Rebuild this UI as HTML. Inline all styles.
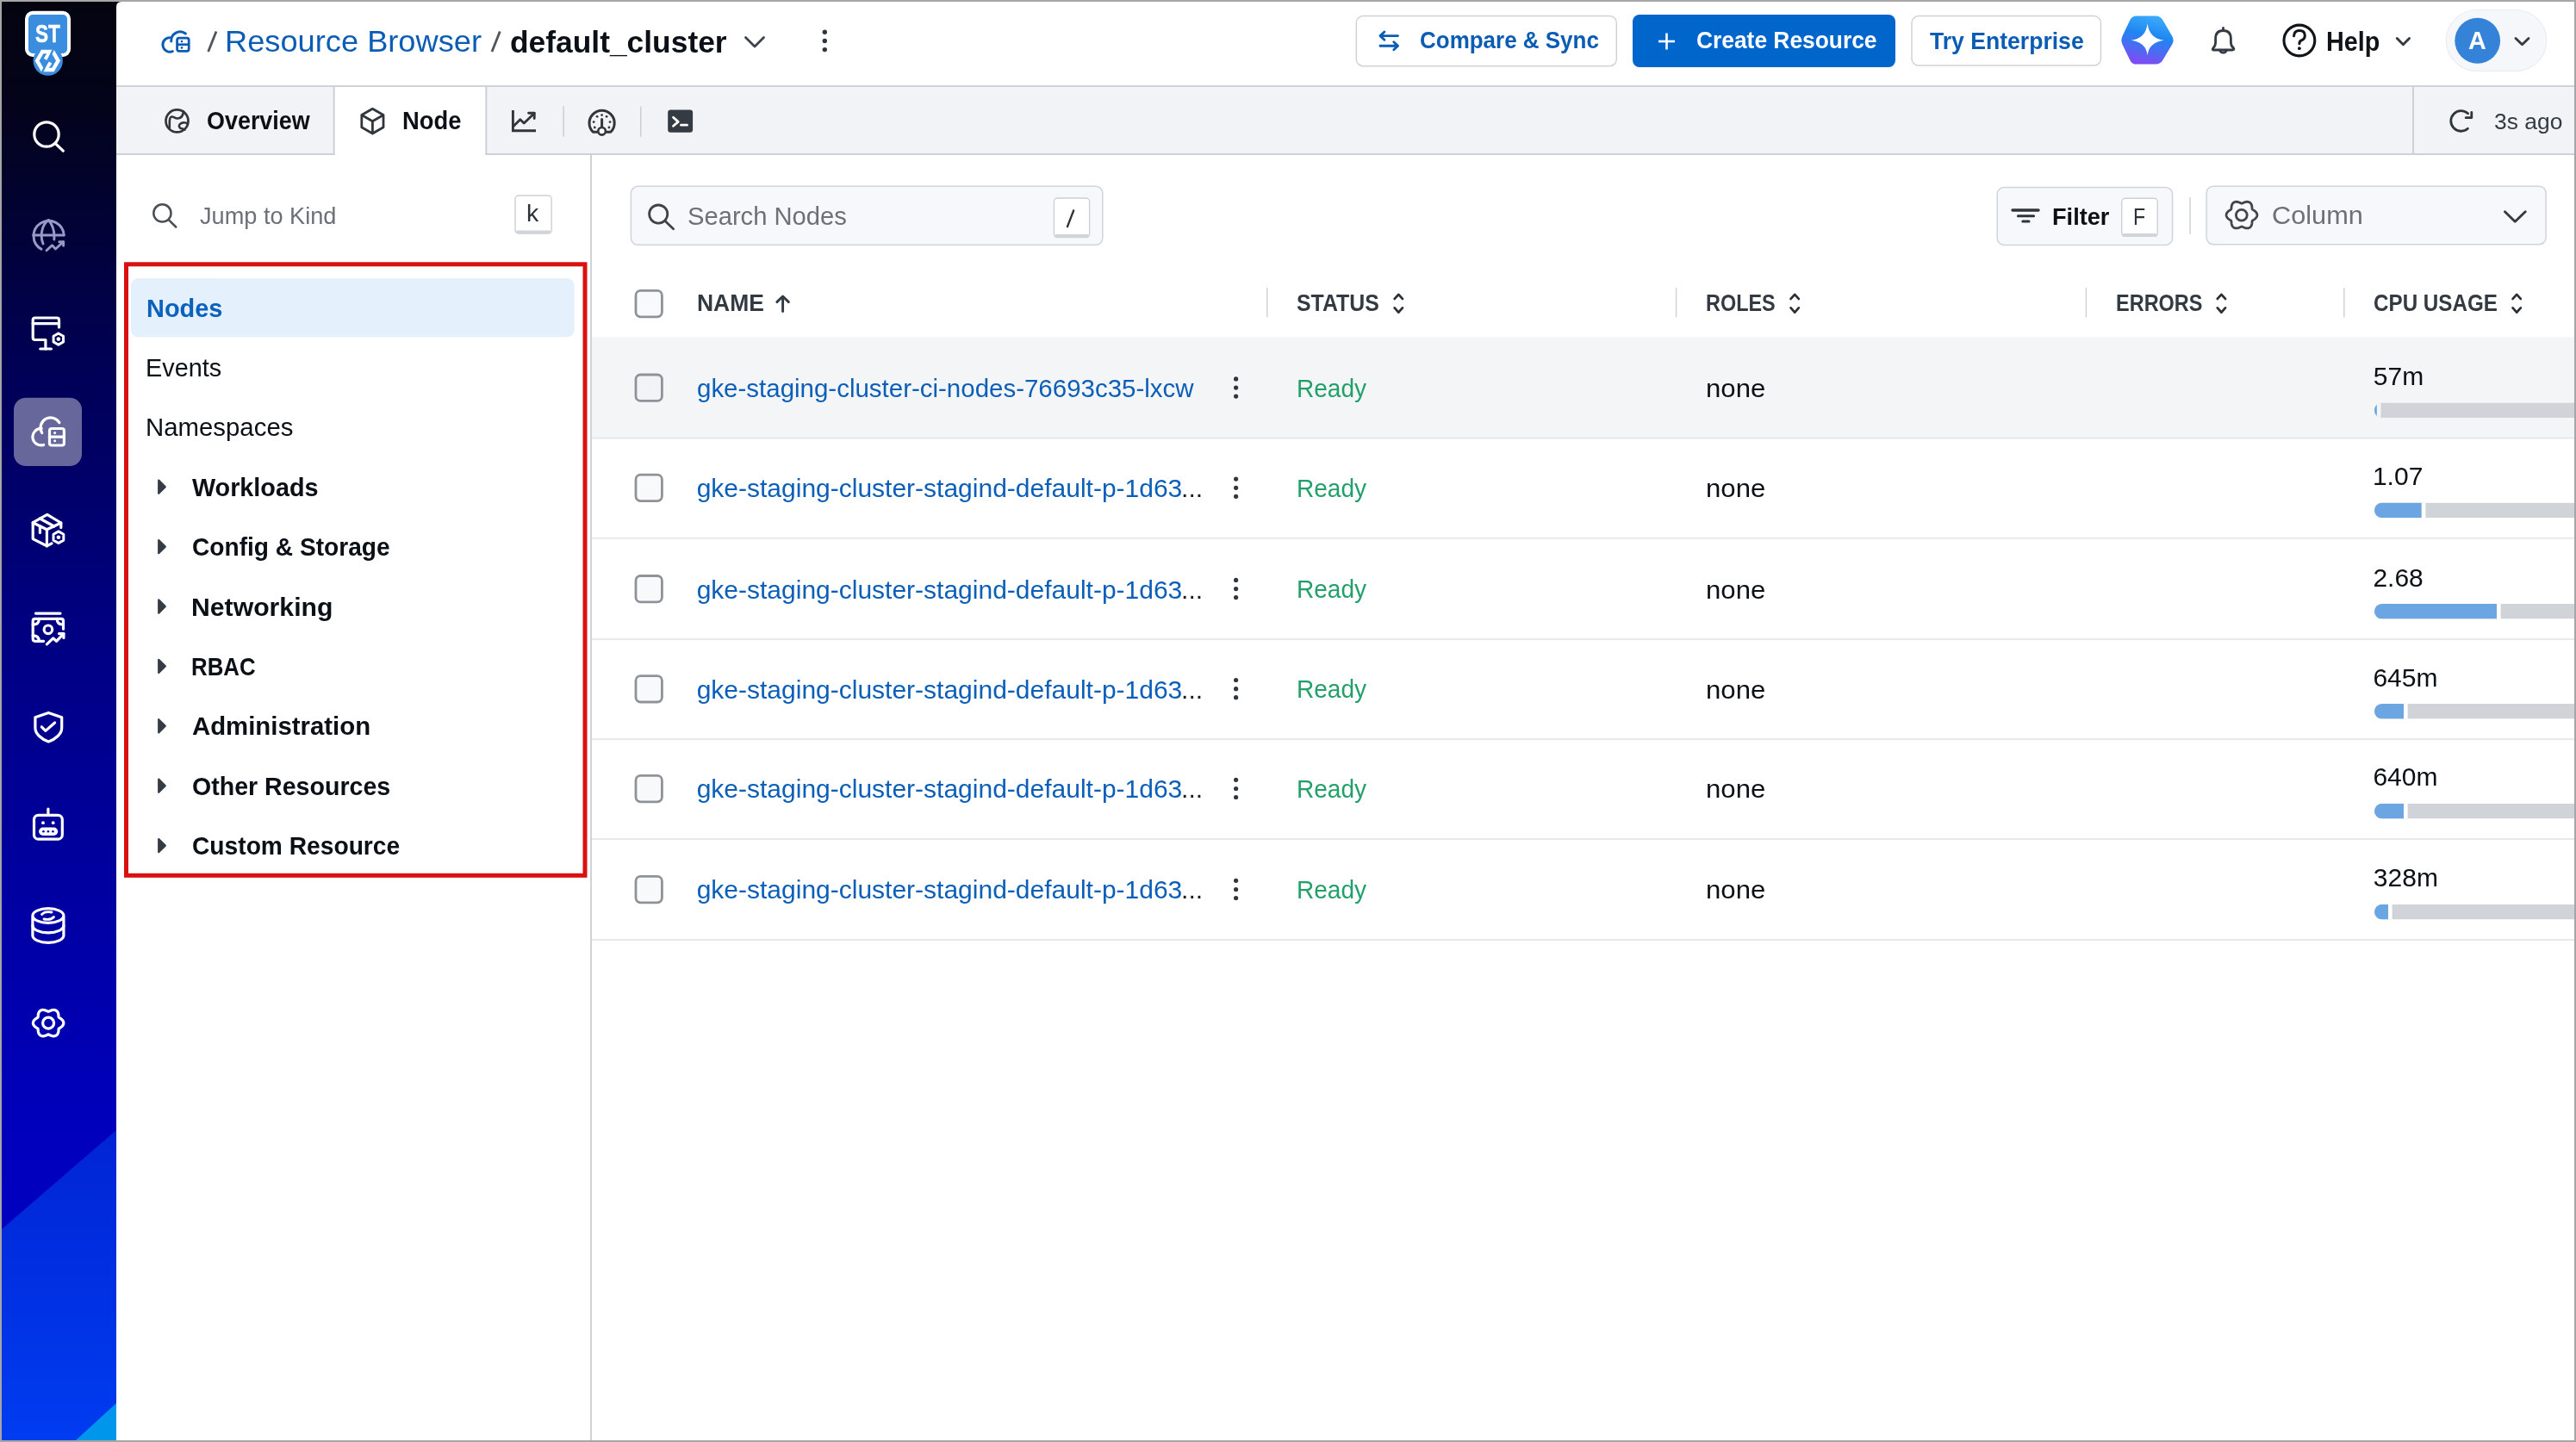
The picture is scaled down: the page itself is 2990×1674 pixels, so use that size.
<!DOCTYPE html>
<html><head><meta charset="utf-8"><style>
html,body{margin:0;padding:0;width:2990px;height:1674px;overflow:hidden;background:#a6a6a6;}
body{position:relative;font-family:"Liberation Sans",sans-serif;}
.t{position:absolute;white-space:nowrap;line-height:1;transform-origin:0 0;}
.a{position:absolute;box-sizing:border-box;}
svg{position:absolute;overflow:visible;}
</style></head><body>
<svg width="2990" height="1674" style="left:0;top:0"><defs>
<linearGradient id="sb" x1="0" y1="0" x2="0" y2="1">
 <stop offset="0" stop-color="#040410"/>
 <stop offset="0.07" stop-color="#03031a"/>
 <stop offset="0.24" stop-color="#000052"/>
 <stop offset="0.42" stop-color="#00007e"/>
 <stop offset="0.60" stop-color="#00009e"/>
 <stop offset="0.78" stop-color="#0000bc"/>
 <stop offset="1" stop-color="#0000c8"/>
</linearGradient>
<linearGradient id="sb2" x1="0" y1="0" x2="0" y2="1">
 <stop offset="0" stop-color="#0024d4"/>
 <stop offset="1" stop-color="#003cf0"/>
</linearGradient>
<linearGradient id="ai" x1="0.85" y1="0" x2="0.6" y2="1">
 <stop offset="0" stop-color="#3fb0fb"/>
 <stop offset="0.45" stop-color="#1f86f2"/>
 <stop offset="0.8" stop-color="#5565f2"/>
 <stop offset="1" stop-color="#7b4ef5"/>
</linearGradient>
</defs>
<rect x="2" y="2" width="143" height="1670" fill="url(#sb)" />
<path d="M2 1427 L135 1312 L135 1672 L2 1672 Z" fill="url(#sb2)" />
<path d="M135 1629 L135 1672 L88 1672 Z" fill="#0096ec" />
<rect x="16" y="461.7" width="79" height="79.3" fill="#67679c" rx="14" />
<rect x="29" y="12.8" width="53" height="53.2" fill="#ffffff" rx="9" />
<rect x="33" y="17" width="45" height="45" fill="#3b8ddf" rx="5" />
<circle cx="55.7" cy="70.6" r="17.2" fill="#3b8ddf"/>
<path d="M67.50 70.50 L61.40 81.07 L49.20 81.07 L43.10 70.50 L49.20 59.93 L61.40 59.93 Z" stroke="#ffffff" stroke-width="4.4" fill="none" stroke-linejoin="miter" stroke-linecap="round" />
<path d="M57.8 60.5 L52.6 68.8" stroke="#ffffff" stroke-width="4.2" fill="none" stroke-linejoin="round" stroke-linecap="butt" />
<path d="M53 80.5 L58.6 72.6" stroke="#ffffff" stroke-width="4.2" fill="none" stroke-linejoin="round" stroke-linecap="butt" />
<line x1="62.8" y1="55.5" x2="48.2" y2="85.5" stroke="#3b8ddf" stroke-width="2.4" stroke-linecap="butt"/>
<circle cx="54" cy="156" r="14.2" fill="none" stroke="#ffffff" stroke-width="3.2"/>
<line x1="64.3" y1="166.6" x2="73.3" y2="175.2" stroke="#ffffff" stroke-width="3.2" stroke-linecap="round"/>
<path d="M74.2 273 A17.6 17.6 0 1 0 48 289.3" stroke="#9899c4" stroke-width="2.9" fill="none" stroke-linejoin="round" stroke-linecap="round" />
<line x1="38.6" y1="273" x2="74.2" y2="273" stroke="#9899c4" stroke-width="2.9" stroke-linecap="round"/>
<path d="M56.3 255.5 C47 262 47 276 50 283" stroke="#9899c4" stroke-width="2.9" fill="none" stroke-linejoin="round" stroke-linecap="round" />
<path d="M56.3 255.5 C62 262 63.5 270 62.8 278" stroke="#9899c4" stroke-width="2.9" fill="none" stroke-linejoin="round" stroke-linecap="round" />
<path d="M54 290.8 L60.5 284.8 L64.5 289 L73.4 280.8" stroke="#9899c4" stroke-width="2.9" fill="none" stroke-linejoin="round" stroke-linecap="round" />
<path d="M68.8 280.8 L73.6 280.6 L73.6 285.2" stroke="#9899c4" stroke-width="2.9" fill="none" stroke-linejoin="round" stroke-linecap="round" />
<path d="M68.5 380 V371.5 Q68.5 369 66 369 H40.7 Q38.2 369 38.2 371.5 V392 Q38.2 394.5 40.7 394.5 H52.9 V405" stroke="#ffffff" stroke-width="3.2" fill="none" stroke-linejoin="round" stroke-linecap="round" />
<line x1="38.2" y1="375.6" x2="68.5" y2="375.6" stroke="#ffffff" stroke-width="3.2" stroke-linecap="round"/>
<line x1="46.8" y1="405" x2="59.4" y2="405" stroke="#ffffff" stroke-width="3.2" stroke-linecap="round"/>
<path d="M73.52 396.90 L67.80 400.20 L62.08 396.90 L62.08 390.30 L67.80 387.00 L73.52 390.30 Z" stroke="#ffffff" stroke-width="3.0" fill="none" stroke-linejoin="round" stroke-linecap="round" />
<circle cx="67.8" cy="393.6" r="2.3" fill="#ffffff"/>
<path d="M50.6 516.4 A9.7 9.7 0 1 1 48.3 497.5" stroke="#ffffff" stroke-width="3.2" fill="none" stroke-linejoin="round" stroke-linecap="round" />
<path d="M48.7 502.5 A11.5 11.5 0 0 1 68.9 490.6" stroke="#ffffff" stroke-width="3.2" fill="none" stroke-linejoin="round" stroke-linecap="round" />
<rect x="57.5" y="497.5" width="16.9" height="19.5" fill="none" rx="2.5" stroke="#ffffff" stroke-width="3.2" />
<line x1="57.5" y1="507.2" x2="74.4" y2="507.2" stroke="#ffffff" stroke-width="3.2" stroke-linecap="round"/>
<circle cx="63.6" cy="502.4" r="1.5" fill="#ffffff"/>
<circle cx="63.6" cy="511.8" r="1.5" fill="#ffffff"/>
<path d="M70.8 612.4 V607 L54.8 597.3 L38.2 606.7 V625.6 L54.4 633.8 L60 630.8" stroke="#ffffff" stroke-width="3.2" fill="none" stroke-linejoin="round" stroke-linecap="round" />
<path d="M38.2 606.7 L54.4 614.7 L70.8 607" stroke="#ffffff" stroke-width="3.2" fill="none" stroke-linejoin="round" stroke-linecap="round" />
<line x1="54.4" y1="614.7" x2="54.4" y2="633.8" stroke="#ffffff" stroke-width="3.2" stroke-linecap="round"/>
<path d="M46.4 602 L62.8 611 " stroke="#ffffff" stroke-width="3.2" fill="none" stroke-linejoin="round" stroke-linecap="round" />
<path d="M46.4 610.7 V618.5" stroke="#ffffff" stroke-width="3.2" fill="none" stroke-linejoin="round" stroke-linecap="round" />
<path d="M73.79 627.10 L67.90 630.50 L62.01 627.10 L62.01 620.30 L67.90 616.90 L73.79 620.30 Z" stroke="#ffffff" stroke-width="3.0" fill="none" stroke-linejoin="round" stroke-linecap="round" />
<circle cx="67.9" cy="623.7" r="2.3" fill="#ffffff"/>
<line x1="41.4" y1="712.1" x2="70" y2="712.1" stroke="#ffffff" stroke-width="3.2" stroke-linecap="round"/>
<path d="M73.5 730.2 V721 Q73.5 718.4 71 718.4 H40.7 Q38.2 718.4 38.2 721 V741.8 Q38.2 744.3 40.7 744.3 H50.6" stroke="#ffffff" stroke-width="3.2" fill="none" stroke-linejoin="round" stroke-linecap="round" />
<path d="M38.2 725 Q45.3 725 45.3 718.4" stroke="#ffffff" stroke-width="3.2" fill="none" stroke-linejoin="round" stroke-linecap="round" />
<path d="M66.2 718.4 Q66.2 725 73.5 725" stroke="#ffffff" stroke-width="3.2" fill="none" stroke-linejoin="round" stroke-linecap="round" />
<path d="M38.2 737.9 Q45.3 737.9 45.3 744.3" stroke="#ffffff" stroke-width="3.2" fill="none" stroke-linejoin="round" stroke-linecap="round" />
<circle cx="55.9" cy="730.8" r="4.8" fill="none" stroke="#ffffff" stroke-width="3.2"/>
<path d="M54.4 747.8 L61.7 740.9 L65.5 744.3 L73.9 735.6" stroke="#ffffff" stroke-width="3.2" fill="none" stroke-linejoin="round" stroke-linecap="round" />
<path d="M68.5 735.6 H73.9 V740.5" stroke="#ffffff" stroke-width="3.2" fill="none" stroke-linejoin="round" stroke-linecap="round" />
<path d="M56.3 827.4 L40.9 832.8 V845 C40.9 852 48 858 56.3 861 C64.6 858 71.7 852 71.7 845 V832.8 Z" stroke="#ffffff" stroke-width="3.2" fill="none" stroke-linejoin="round" stroke-linecap="round" />
<path d="M48.3 843.8 L52.9 848.4 L63.6 839" stroke="#ffffff" stroke-width="3.2" fill="none" stroke-linejoin="round" stroke-linecap="round" />
<line x1="55.9" y1="939" x2="55.9" y2="945.8" stroke="#ffffff" stroke-width="3.2" stroke-linecap="round"/>
<rect x="39.5" y="946.4" width="32.8" height="27.8" fill="none" rx="5" stroke="#ffffff" stroke-width="3.2" />
<circle cx="50" cy="955.2" r="1.9" fill="#ffffff"/>
<circle cx="61.7" cy="955.2" r="1.9" fill="#ffffff"/>
<rect x="45.1" y="960.5" width="22.1" height="9.4" fill="#ffffff" rx="4.7" />
<circle cx="50.4" cy="965.2" r="1.3" fill="#0000a0"/>
<circle cx="55.9" cy="965.2" r="1.3" fill="#0000a0"/>
<circle cx="61.4" cy="965.2" r="1.3" fill="#0000a0"/>
<path d="M37.9 1063 A18 8.3 0 1 0 73.9 1063 A18 8.3 0 1 0 37.9 1063 V1086 A18 8.3 0 0 0 73.9 1086 V1063" stroke="#ffffff" stroke-width="3.2" fill="none" stroke-linejoin="round" stroke-linecap="round" />
<path d="M37.9 1074.5 A18 8.3 0 0 0 73.9 1074.5" stroke="#ffffff" stroke-width="3.2" fill="none" stroke-linejoin="round" stroke-linecap="round" />
<path d="M48.5 1061.5 Q52 1057.5 60 1059" stroke="#ffffff" stroke-width="2.8" fill="none" stroke-linejoin="round" stroke-linecap="round" />
<path d="M62.5 1064.5 Q59 1068.5 51 1067" stroke="#ffffff" stroke-width="2.8" fill="none" stroke-linejoin="round" stroke-linecap="round" />
<path d="M73.80 1187.60 L73.78 1188.04 L73.71 1188.48 L73.60 1188.91 L73.45 1189.33 L73.26 1189.75 L73.04 1190.15 L72.78 1190.54 L72.48 1190.91 L72.17 1191.26 L71.82 1191.60 L71.46 1191.92 L71.09 1192.23 L70.70 1192.51 L70.31 1192.78 L69.93 1193.04 L69.54 1193.29 L69.17 1193.52 L68.82 1193.76 L68.50 1193.99 L68.22 1194.25 L68.13 1194.60 L68.07 1194.99 L68.04 1195.39 L68.00 1195.82 L67.97 1196.25 L67.93 1196.70 L67.88 1197.16 L67.81 1197.62 L67.72 1198.08 L67.61 1198.53 L67.47 1198.99 L67.31 1199.43 L67.11 1199.85 L66.89 1200.26 L66.64 1200.65 L66.36 1201.01 L66.04 1201.35 L65.71 1201.65 L65.34 1201.92 L64.95 1202.16 L64.54 1202.36 L64.11 1202.53 L63.66 1202.65 L63.20 1202.74 L62.72 1202.79 L62.25 1202.81 L61.76 1202.79 L61.28 1202.73 L60.79 1202.65 L60.31 1202.54 L59.84 1202.40 L59.38 1202.24 L58.92 1202.07 L58.48 1201.89 L58.05 1201.69 L57.64 1201.50 L57.24 1201.32 L56.85 1201.14 L56.47 1201.00 L56.10 1200.90 L55.73 1201.00 L55.35 1201.14 L54.96 1201.32 L54.56 1201.50 L54.15 1201.69 L53.72 1201.89 L53.28 1202.07 L52.82 1202.24 L52.36 1202.40 L51.89 1202.54 L51.41 1202.65 L50.92 1202.73 L50.44 1202.79 L49.95 1202.81 L49.48 1202.79 L49.00 1202.74 L48.54 1202.65 L48.09 1202.53 L47.66 1202.36 L47.25 1202.16 L46.86 1201.92 L46.49 1201.65 L46.16 1201.35 L45.84 1201.01 L45.56 1200.65 L45.31 1200.26 L45.09 1199.85 L44.89 1199.43 L44.73 1198.99 L44.59 1198.53 L44.48 1198.08 L44.39 1197.62 L44.32 1197.16 L44.27 1196.70 L44.23 1196.25 L44.20 1195.82 L44.16 1195.39 L44.13 1194.99 L44.07 1194.60 L43.98 1194.25 L43.70 1193.99 L43.38 1193.76 L43.03 1193.52 L42.66 1193.29 L42.27 1193.04 L41.89 1192.78 L41.50 1192.51 L41.11 1192.23 L40.74 1191.92 L40.38 1191.60 L40.03 1191.26 L39.72 1190.91 L39.42 1190.54 L39.16 1190.15 L38.94 1189.75 L38.75 1189.33 L38.60 1188.91 L38.49 1188.48 L38.42 1188.04 L38.40 1187.60 L38.42 1187.16 L38.49 1186.72 L38.60 1186.29 L38.75 1185.87 L38.94 1185.45 L39.16 1185.05 L39.42 1184.66 L39.72 1184.29 L40.03 1183.94 L40.38 1183.60 L40.74 1183.28 L41.11 1182.97 L41.50 1182.69 L41.89 1182.42 L42.27 1182.16 L42.66 1181.91 L43.03 1181.68 L43.38 1181.44 L43.70 1181.21 L43.98 1180.95 L44.07 1180.60 L44.13 1180.21 L44.16 1179.81 L44.20 1179.38 L44.23 1178.95 L44.27 1178.50 L44.32 1178.04 L44.39 1177.58 L44.48 1177.12 L44.59 1176.67 L44.73 1176.21 L44.89 1175.77 L45.09 1175.35 L45.31 1174.94 L45.56 1174.55 L45.84 1174.19 L46.16 1173.85 L46.49 1173.55 L46.86 1173.28 L47.25 1173.04 L47.66 1172.84 L48.09 1172.67 L48.54 1172.55 L49.00 1172.46 L49.48 1172.41 L49.95 1172.39 L50.44 1172.41 L50.92 1172.47 L51.41 1172.55 L51.89 1172.66 L52.36 1172.80 L52.82 1172.96 L53.28 1173.13 L53.72 1173.31 L54.15 1173.51 L54.56 1173.70 L54.96 1173.88 L55.35 1174.06 L55.73 1174.20 L56.10 1174.30 L56.47 1174.20 L56.85 1174.06 L57.24 1173.88 L57.64 1173.70 L58.05 1173.51 L58.48 1173.31 L58.92 1173.13 L59.38 1172.96 L59.84 1172.80 L60.31 1172.66 L60.79 1172.55 L61.28 1172.47 L61.76 1172.41 L62.25 1172.39 L62.72 1172.41 L63.20 1172.46 L63.66 1172.55 L64.11 1172.67 L64.54 1172.84 L64.95 1173.04 L65.34 1173.28 L65.71 1173.55 L66.04 1173.85 L66.36 1174.19 L66.64 1174.55 L66.89 1174.94 L67.11 1175.35 L67.31 1175.77 L67.47 1176.21 L67.61 1176.67 L67.72 1177.12 L67.81 1177.58 L67.88 1178.04 L67.93 1178.50 L67.97 1178.95 L68.00 1179.38 L68.04 1179.81 L68.07 1180.21 L68.13 1180.60 L68.22 1180.95 L68.50 1181.21 L68.82 1181.44 L69.17 1181.68 L69.54 1181.91 L69.93 1182.16 L70.31 1182.42 L70.70 1182.69 L71.09 1182.97 L71.46 1183.28 L71.82 1183.60 L72.17 1183.94 L72.48 1184.29 L72.78 1184.66 L73.04 1185.05 L73.26 1185.45 L73.45 1185.87 L73.60 1186.29 L73.71 1186.72 L73.78 1187.16 Z" stroke="#ffffff" stroke-width="3.2" fill="none" stroke-linejoin="round" stroke-linecap="round" />
<circle cx="56.1" cy="1187.6" r="6.5" fill="none" stroke="#ffffff" stroke-width="3.2"/>
<path d="M141 2 H2988 V1672 H135 V8 Q135 2 141 2 Z" fill="#ffffff"/>
<rect x="135" y="99" width="2853" height="2" fill="#cfd2d6" />
<rect x="135" y="101" width="2853" height="77" fill="#f2f3f6" />
<rect x="135" y="178" width="2853" height="2" fill="#cdd0d4" />
<rect x="388.6" y="101" width="174.8" height="79" fill="#ffffff" />
<rect x="386.6" y="101" width="2" height="79" fill="#cdd0d4" />
<rect x="563.4" y="101" width="2" height="79" fill="#cdd0d4" />
<rect x="2800" y="101" width="2" height="77" fill="#cdd0d4" />
<rect x="685" y="180" width="2" height="1492" fill="#d0d2d5" />
<path d="M200.3 59.6 A8.3 8.3 0 1 1 197 43.6" stroke="#0b5cb5" stroke-width="2.9" fill="none" stroke-linejoin="round" stroke-linecap="round" />
<path d="M198.7 48 A10.4 10.4 0 0 1 215.4 39" stroke="#0b5cb5" stroke-width="2.9" fill="none" stroke-linejoin="round" stroke-linecap="round" />
<rect x="205.6" y="44.2" width="13.6" height="15.2" fill="none" rx="2.3" stroke="#0b5cb5" stroke-width="2.8" />
<line x1="205.6" y1="51.7" x2="219.2" y2="51.7" stroke="#0b5cb5" stroke-width="2.6" stroke-linecap="butt"/>
<circle cx="211" cy="48.1" r="1.3" fill="#0b5cb5"/>
<circle cx="211" cy="55.4" r="1.3" fill="#0b5cb5"/>
<line x1="251" y1="36.5" x2="241.7" y2="60" stroke="#50555c" stroke-width="2.8" stroke-linecap="butt"/>
<line x1="580.3" y1="36.5" x2="571" y2="60" stroke="#50555c" stroke-width="2.8" stroke-linecap="butt"/>
<path d="M865.5 43.5 L876 54 L886.5 43.5" stroke="#3d434a" stroke-width="2.8" fill="none" stroke-linejoin="round" stroke-linecap="round" />
<circle cx="957.3" cy="37.2" r="2.7" fill="#2f353c"/>
<circle cx="957.3" cy="47.5" r="2.7" fill="#2f353c"/>
<circle cx="957.3" cy="57.6" r="2.7" fill="#2f353c"/>
<rect x="1574.3" y="18.4" width="302" height="58.3" fill="#ffffff" rx="8" stroke="#cfd3d8" stroke-width="1.5" />
<path d="M1622.5 41.6 H1602.5 M1606.9 37 L1602 41.6 L1606.9 46.2" stroke="#0b5cb5" stroke-width="2.9" fill="none" stroke-linejoin="round" stroke-linecap="round" />
<path d="M1602 53.3 H1622 M1617.8 48.8 L1622.6 53.3 L1617.8 57.8" stroke="#0b5cb5" stroke-width="2.9" fill="none" stroke-linejoin="round" stroke-linecap="round" />
<rect x="1895" y="17" width="305" height="61" fill="#0066cc" rx="8" />
<line x1="1934.5" y1="38.5" x2="1934.5" y2="57.5" stroke="#ffffff" stroke-width="2.6" stroke-linecap="butt"/>
<line x1="1925" y1="48" x2="1944" y2="48" stroke="#ffffff" stroke-width="2.6" stroke-linecap="butt"/>
<rect x="2219" y="18.6" width="219.5" height="57.5" fill="#ffffff" rx="8" stroke="#cfd3d8" stroke-width="1.5" />
<path d="M2463.58 51.66 Q2461.20 46.70 2463.57 41.74 L2472.23 23.56 Q2474.60 18.60 2480.10 18.60 L2502.10 18.60 Q2507.60 18.60 2510.37 23.35 L2521.23 41.95 Q2524.00 46.70 2521.21 51.44 L2510.39 69.86 Q2507.60 74.60 2502.10 74.60 L2480.10 74.60 Q2474.60 74.60 2472.22 69.64 Z" fill="url(#ai)" />
<path d="M2492.6 27.2 Q2494.5 44.5 2511.8 46.7 Q2494.5 49 2492.6 63.9 Q2490.7 49 2473.6 46.7 Q2490.7 44.5 2492.6 27.2 Z" fill="#ffffff" />
<path d="M2580.5 32.5 V35.3 M2569 55.5 Q2571.6 53.5 2571.6 49 V45 Q2571.6 35.5 2580.5 35.5 Q2589.4 35.5 2589.4 45 V49 Q2589.4 53.5 2592.3 55.5 Q2594 58 2591 58 H2570 Q2567 58 2569 55.5 Z" stroke="#353b43" stroke-width="2.8" fill="none" stroke-linejoin="round" stroke-linecap="round" />
<path d="M2576.7 58.2 A3.9 3.9 0 0 0 2584.3 58.2" stroke="#353b43" stroke-width="2.8" fill="none" stroke-linejoin="round" stroke-linecap="round" />
<circle cx="2668.9" cy="47" r="17.9" fill="none" stroke="#111418" stroke-width="3.1"/>
<path d="M2662.6 41.8 Q2662.8 35.6 2669 35.6 Q2675.3 35.6 2675.3 41.5 Q2675.3 45.3 2671.2 46.9 Q2668.9 47.9 2668.9 50.8" stroke="#111418" stroke-width="3.0" fill="none" stroke-linejoin="round" stroke-linecap="round" />
<circle cx="2668.9" cy="56.2" r="1.9" fill="#111418"/>
<path d="M2782.3 44.5 L2789.4 51.8 L2796.5 44.5" stroke="#353b43" stroke-width="2.9" fill="none" stroke-linejoin="round" stroke-linecap="round" />
<rect x="2839.3" y="11.5" width="116.5" height="71" fill="#f5f7fa" rx="35.5" stroke="#eaedf0" stroke-width="1.2" />
<circle cx="2875.7" cy="47.25" r="26.4" fill="#3583d8"/>
<path d="M2920 44.5 L2927.5 51.8 L2935 44.5" stroke="#353b43" stroke-width="2.9" fill="none" stroke-linejoin="round" stroke-linecap="round" />
<circle cx="205.5" cy="140.4" r="13" fill="none" stroke="#31363d" stroke-width="2.7"/>
<path d="M213 129.5 C212.5 134 210 137.5 205.8 137.5 C203 137.5 202 135.5 199.5 135.5 C197 135.5 196.8 139 196.8 142 V148.5" stroke="#31363d" stroke-width="2.6" fill="none" stroke-linejoin="round" stroke-linecap="round" />
<path d="M217.8 143.8 C215 141.5 210.5 142 208.5 144.5 C207 146.5 208.5 149.2 211 149.2 L214.5 150.5" stroke="#31363d" stroke-width="2.6" fill="none" stroke-linejoin="round" stroke-linecap="round" />
<path d="M432.4 126.3 L445 133.5 V147.8 L432.4 155 L419.8 147.8 V133.5 Z M419.8 133.5 L432.4 140.7 L445 133.5 M432.4 140.7 V155" stroke="#31363d" stroke-width="2.8" fill="none" stroke-linejoin="round" stroke-linecap="round" />
<path d="M595.4 128 V151.8 H622" stroke="#31363d" stroke-width="2.9" fill="none" stroke-linejoin="miter" stroke-linecap="butt" />
<path d="M596 146.5 L603.8 138.8 L608.2 143 L620.2 131.5" stroke="#31363d" stroke-width="2.9" fill="none" stroke-linejoin="round" stroke-linecap="round" />
<path d="M613.6 131.2 H620.2 V137.6" stroke="#31363d" stroke-width="2.9" fill="none" stroke-linejoin="round" stroke-linecap="round" />
<rect x="653.4" y="123.4" width="1.5" height="35.4" fill="#cbd0d5" />
<path d="M693.6 153.3 H688.4 A14.6 14.6 0 1 1 708.8 153.3 H703.6" stroke="#31363d" stroke-width="3" fill="none" stroke-linejoin="round" stroke-linecap="round" />
<line x1="698.6" y1="138.5" x2="698.6" y2="147.5" stroke="#31363d" stroke-width="3" stroke-linecap="round"/>
<circle cx="698.6" cy="152.3" r="4.3" fill="#ffffff" stroke="#31363d" stroke-width="2.6"/>
<circle cx="698.6" cy="133.6" r="1.4" fill="#31363d"/>
<circle cx="693.0936662110299" cy="135.33614037482567" r="1.4" fill="#31363d"/>
<circle cx="704.1063337889701" cy="135.33614037482567" r="1.4" fill="#31363d"/>
<circle cx="689.1458455710829" cy="141.53297749439747" r="1.4" fill="#31363d"/>
<circle cx="708.0541544289172" cy="141.53297749439747" r="1.4" fill="#31363d"/>
<circle cx="690.2861561236695" cy="148.0" r="1.4" fill="#31363d"/>
<circle cx="706.9138438763306" cy="148.0" r="1.4" fill="#31363d"/>
<rect x="743" y="123.4" width="1.5" height="35.4" fill="#cbd0d5" />
<rect x="775.2" y="127.6" width="28.9" height="26.1" fill="#353b43" rx="3.2" />
<path d="M781.5 136.2 L787.2 141.4 L781.5 146.3" stroke="#ffffff" stroke-width="2.8" fill="none" stroke-linejoin="round" stroke-linecap="round" />
<line x1="790.5" y1="145.2" x2="797.5" y2="145.2" stroke="#ffffff" stroke-width="2.8" stroke-linecap="round"/>
<path d="M2864.6 131.8 A11.8 11.8 0 1 0 2864.4 149.3" stroke="#2f353c" stroke-width="2.8" fill="none" stroke-linejoin="round" stroke-linecap="round" />
<path d="M2868.8 130.3 V136.7 H2862.2" stroke="#2f353c" stroke-width="2.8" fill="none" stroke-linejoin="round" stroke-linecap="round" />
<circle cx="188.4" cy="247.4" r="10.1" fill="none" stroke="#4a4f56" stroke-width="2.5"/>
<line x1="196" y1="255.3" x2="204.2" y2="263.5" stroke="#4a4f56" stroke-width="2.5" stroke-linecap="round"/>
<rect x="598" y="227" width="42.2" height="44" fill="#ffffff" rx="4" stroke="#cdd0d4" stroke-width="1.4" />
<rect x="598.8" y="267.5" width="40.6" height="3.8" fill="#d1d4d8" rx="1.5" />
<rect x="152" y="323.2" width="514.6" height="68.1" fill="#e4f0fb" rx="8" />
<rect x="146.5" y="306.8" width="532.5" height="709.5" fill="none" stroke="#d9100f" stroke-width="5" />
<path d="M184.2 557.6 L191.8 565.2 L184.2 572.8 Z" stroke="#353c45" stroke-width="2.2" fill="#353c45" stroke-linejoin="round" stroke-linecap="round" />
<path d="M184.2 627.0 L191.8 634.6 L184.2 642.2 Z" stroke="#353c45" stroke-width="2.2" fill="#353c45" stroke-linejoin="round" stroke-linecap="round" />
<path d="M184.2 696.4 L191.8 704.0 L184.2 711.6 Z" stroke="#353c45" stroke-width="2.2" fill="#353c45" stroke-linejoin="round" stroke-linecap="round" />
<path d="M184.2 765.8 L191.8 773.4 L184.2 781.0 Z" stroke="#353c45" stroke-width="2.2" fill="#353c45" stroke-linejoin="round" stroke-linecap="round" />
<path d="M184.2 835.2 L191.8 842.8 L184.2 850.4 Z" stroke="#353c45" stroke-width="2.2" fill="#353c45" stroke-linejoin="round" stroke-linecap="round" />
<path d="M184.2 904.6 L191.8 912.2 L184.2 919.8 Z" stroke="#353c45" stroke-width="2.2" fill="#353c45" stroke-linejoin="round" stroke-linecap="round" />
<path d="M184.2 974.0 L191.8 981.6 L184.2 989.2 Z" stroke="#353c45" stroke-width="2.2" fill="#353c45" stroke-linejoin="round" stroke-linecap="round" />
<rect x="732.4" y="216.3" width="547.4" height="68" fill="#f6f8fb" rx="8" stroke="#d0d5db" stroke-width="1.5" />
<circle cx="764.2" cy="248.6" r="10.6" fill="none" stroke="#3d434a" stroke-width="2.8"/>
<line x1="772.2" y1="256.8" x2="781.6" y2="265.8" stroke="#3d434a" stroke-width="2.8" stroke-linecap="round"/>
<rect x="1223.4" y="230" width="41.2" height="45.6" fill="#ffffff" rx="4" stroke="#cdd0d4" stroke-width="1.4" />
<rect x="1224.1" y="272" width="39.8" height="4" fill="#d1d4d8" rx="1.5" />
<line x1="1246.5" y1="243.5" x2="1238.6" y2="264" stroke="#2d3238" stroke-width="2.3" stroke-linecap="butt"/>
<rect x="2318.2" y="217.4" width="203.4" height="67" fill="#f6f8fb" rx="8" stroke="#d0d5db" stroke-width="1.5" />
<line x1="2336" y1="244" x2="2366" y2="244" stroke="#2f353c" stroke-width="3.4" stroke-linecap="round"/>
<line x1="2342.4" y1="250.7" x2="2360.6" y2="250.7" stroke="#2f353c" stroke-width="3.0" stroke-linecap="round"/>
<line x1="2347.8" y1="257" x2="2355" y2="257" stroke="#2f353c" stroke-width="3.0" stroke-linecap="round"/>
<rect x="2462.7" y="230.2" width="41.6" height="44.2" fill="#ffffff" rx="4" stroke="#cdd0d4" stroke-width="1.4" />
<rect x="2463.4" y="271" width="40.2" height="4" fill="#d1d4d8" rx="1.5" />
<rect x="2541.3" y="229" width="1.5" height="43" fill="#cfd3d8" />
<rect x="2561.1" y="216.2" width="394" height="67.5" fill="#f6f8fb" rx="8" stroke="#d0d5db" stroke-width="1.5" />
<path d="M2619.90 249.60 L2619.88 250.04 L2619.81 250.49 L2619.70 250.92 L2619.55 251.35 L2619.35 251.77 L2619.12 252.18 L2618.85 252.57 L2618.55 252.94 L2618.23 253.30 L2617.88 253.64 L2617.51 253.96 L2617.13 254.27 L2616.73 254.56 L2616.34 254.83 L2615.94 255.09 L2615.55 255.33 L2615.17 255.57 L2614.82 255.80 L2614.49 256.04 L2614.21 256.30 L2614.11 256.65 L2614.06 257.04 L2614.03 257.45 L2614.00 257.88 L2613.97 258.33 L2613.94 258.78 L2613.89 259.24 L2613.82 259.71 L2613.73 260.18 L2613.62 260.64 L2613.49 261.10 L2613.32 261.55 L2613.13 261.98 L2612.91 262.40 L2612.65 262.79 L2612.37 263.16 L2612.06 263.50 L2611.71 263.81 L2611.34 264.09 L2610.95 264.33 L2610.53 264.53 L2610.10 264.70 L2609.64 264.82 L2609.18 264.91 L2608.70 264.96 L2608.21 264.97 L2607.72 264.95 L2607.23 264.89 L2606.74 264.80 L2606.25 264.69 L2605.78 264.54 L2605.31 264.38 L2604.85 264.20 L2604.40 264.01 L2603.97 263.81 L2603.55 263.62 L2603.15 263.42 L2602.75 263.25 L2602.37 263.09 L2602.00 263.00 L2601.63 263.09 L2601.25 263.25 L2600.85 263.42 L2600.45 263.62 L2600.03 263.81 L2599.60 264.01 L2599.15 264.20 L2598.69 264.38 L2598.22 264.54 L2597.75 264.69 L2597.26 264.80 L2596.77 264.89 L2596.28 264.95 L2595.79 264.97 L2595.30 264.96 L2594.82 264.91 L2594.36 264.82 L2593.90 264.70 L2593.47 264.53 L2593.05 264.33 L2592.66 264.09 L2592.29 263.81 L2591.94 263.50 L2591.63 263.16 L2591.35 262.79 L2591.09 262.40 L2590.87 261.98 L2590.68 261.55 L2590.51 261.10 L2590.38 260.64 L2590.27 260.18 L2590.18 259.71 L2590.11 259.24 L2590.06 258.78 L2590.03 258.33 L2590.00 257.88 L2589.97 257.45 L2589.94 257.04 L2589.89 256.65 L2589.79 256.30 L2589.51 256.04 L2589.18 255.80 L2588.83 255.57 L2588.45 255.33 L2588.06 255.09 L2587.66 254.83 L2587.27 254.56 L2586.87 254.27 L2586.49 253.96 L2586.12 253.64 L2585.77 253.30 L2585.45 252.94 L2585.15 252.57 L2584.88 252.18 L2584.65 251.77 L2584.45 251.35 L2584.30 250.92 L2584.19 250.49 L2584.12 250.04 L2584.10 249.60 L2584.12 249.16 L2584.19 248.71 L2584.30 248.28 L2584.45 247.85 L2584.65 247.43 L2584.88 247.02 L2585.15 246.63 L2585.45 246.26 L2585.77 245.90 L2586.12 245.56 L2586.49 245.24 L2586.87 244.93 L2587.27 244.64 L2587.66 244.37 L2588.06 244.11 L2588.45 243.87 L2588.83 243.63 L2589.18 243.40 L2589.51 243.16 L2589.79 242.90 L2589.89 242.55 L2589.94 242.16 L2589.97 241.75 L2590.00 241.32 L2590.03 240.87 L2590.06 240.42 L2590.11 239.96 L2590.18 239.49 L2590.27 239.02 L2590.38 238.56 L2590.51 238.10 L2590.68 237.65 L2590.87 237.22 L2591.09 236.80 L2591.35 236.41 L2591.63 236.04 L2591.94 235.70 L2592.29 235.39 L2592.66 235.11 L2593.05 234.87 L2593.47 234.67 L2593.90 234.50 L2594.36 234.38 L2594.82 234.29 L2595.30 234.24 L2595.79 234.23 L2596.28 234.25 L2596.77 234.31 L2597.26 234.40 L2597.75 234.51 L2598.22 234.66 L2598.69 234.82 L2599.15 235.00 L2599.60 235.19 L2600.03 235.39 L2600.45 235.58 L2600.85 235.78 L2601.25 235.95 L2601.63 236.11 L2602.00 236.20 L2602.37 236.11 L2602.75 235.95 L2603.15 235.78 L2603.55 235.58 L2603.97 235.39 L2604.40 235.19 L2604.85 235.00 L2605.31 234.82 L2605.78 234.66 L2606.25 234.51 L2606.74 234.40 L2607.23 234.31 L2607.72 234.25 L2608.21 234.23 L2608.70 234.24 L2609.18 234.29 L2609.64 234.38 L2610.10 234.50 L2610.53 234.67 L2610.95 234.87 L2611.34 235.11 L2611.71 235.39 L2612.06 235.70 L2612.37 236.04 L2612.65 236.41 L2612.91 236.80 L2613.13 237.22 L2613.32 237.65 L2613.49 238.10 L2613.62 238.56 L2613.73 239.02 L2613.82 239.49 L2613.89 239.96 L2613.94 240.42 L2613.97 240.87 L2614.00 241.32 L2614.03 241.75 L2614.06 242.16 L2614.11 242.55 L2614.21 242.90 L2614.49 243.16 L2614.82 243.40 L2615.17 243.63 L2615.55 243.87 L2615.94 244.11 L2616.34 244.37 L2616.73 244.64 L2617.13 244.93 L2617.51 245.24 L2617.88 245.56 L2618.23 245.90 L2618.55 246.26 L2618.85 246.63 L2619.12 247.02 L2619.35 247.43 L2619.55 247.85 L2619.70 248.28 L2619.81 248.71 L2619.88 249.16 Z" stroke="#3f454c" stroke-width="2.8" fill="none" stroke-linejoin="round" stroke-linecap="round" />
<circle cx="2601.8" cy="249.8" r="6.4" fill="none" stroke="#3f454c" stroke-width="2.8"/>
<path d="M2907.5 245.8 L2919.3 257.3 L2931.2 245.8" stroke="#353b43" stroke-width="2.9" fill="none" stroke-linejoin="round" stroke-linecap="round" />
<rect x="738.0" y="337.4" width="30.4" height="30.4" fill="#f8f9fb" rx="5.5" stroke="#8f9398" stroke-width="2.8" />
<path d="M908.6 361.5 V345 M901.8 350.6 L908.6 344 L915.4 350.6" stroke="#333a42" stroke-width="2.9" fill="none" stroke-linejoin="round" stroke-linecap="round" />
<rect x="1470.05" y="334" width="1.5" height="34.4" fill="#cfd3d8" />
<rect x="1944.85" y="334" width="1.5" height="34.4" fill="#cfd3d8" />
<rect x="2420.65" y="334" width="1.5" height="34.4" fill="#cfd3d8" />
<rect x="2720.05" y="334" width="1.5" height="34.4" fill="#cfd3d8" />
<path d="M1618.7 346.9 L1623.3 341.9 L1627.8999999999999 346.9 M1618.7 357.4 L1623.3 362.6 L1627.8999999999999 357.4" stroke="#2a3036" stroke-width="2.8" fill="none" stroke-linejoin="round" stroke-linecap="round" />
<path d="M2078.6 346.9 L2083.2 341.9 L2087.7999999999997 346.9 M2078.6 357.4 L2083.2 362.6 L2087.7999999999997 357.4" stroke="#2a3036" stroke-width="2.8" fill="none" stroke-linejoin="round" stroke-linecap="round" />
<path d="M2573.8 346.9 L2578.4 341.9 L2583.0 346.9 M2573.8 357.4 L2578.4 362.6 L2583.0 357.4" stroke="#2a3036" stroke-width="2.8" fill="none" stroke-linejoin="round" stroke-linecap="round" />
<path d="M2916.6 346.9 L2921.2 341.9 L2925.7999999999997 346.9 M2916.6 357.4 L2921.2 362.6 L2925.7999999999997 357.4" stroke="#2a3036" stroke-width="2.8" fill="none" stroke-linejoin="round" stroke-linecap="round" />
<rect x="687" y="391.3" width="2301" height="117.30000000000001" fill="#f4f5f7" />
<rect x="687" y="507.6" width="2301" height="2" fill="#e6e8eb" />
<rect x="738.0" y="435.0" width="30.4" height="30.4" fill="#f1f3f6" rx="5.5" stroke="#8f9398" stroke-width="2.8" />
<circle cx="1434.6" cy="439.90000000000003" r="2.6" fill="#31363d"/>
<circle cx="1434.6" cy="450.1" r="2.6" fill="#31363d"/>
<circle cx="1434.6" cy="460.1" r="2.6" fill="#31363d"/>
<clipPath id="cb0"><rect x="2756" y="467.40000000000003" width="300" height="17.6" rx="8.8"/></clipPath>
<g clip-path="url(#cb0)">
<rect x="2756" y="467.40000000000003" width="232" height="17.6" fill="#d0d3d8" />
<rect x="2756" y="467.40000000000003" width="2.900000000000091" height="17.6" fill="#6ca6e2" />
<rect x="2758.9" y="467.40000000000003" width="4.6" height="17.6" fill="#f4f5f7" />
</g>
<rect x="687" y="623.8" width="2301" height="2" fill="#e6e8eb" />
<rect x="738.0" y="551.1999999999999" width="30.4" height="30.4" fill="#f8f9fb" rx="5.5" stroke="#8f9398" stroke-width="2.8" />
<circle cx="1434.6" cy="556.1" r="2.6" fill="#31363d"/>
<circle cx="1434.6" cy="566.3" r="2.6" fill="#31363d"/>
<circle cx="1434.6" cy="576.3" r="2.6" fill="#31363d"/>
<clipPath id="cb1"><rect x="2756" y="583.6" width="300" height="17.6" rx="8.8"/></clipPath>
<g clip-path="url(#cb1)">
<rect x="2756" y="583.6" width="232" height="17.6" fill="#d0d3d8" />
<rect x="2756" y="583.6" width="54.80000000000018" height="17.6" fill="#6ca6e2" />
<rect x="2810.8" y="583.6" width="4.6" height="17.6" fill="#ffffff" />
</g>
<rect x="687" y="741.1" width="2301" height="2" fill="#e6e8eb" />
<rect x="738.0" y="668.5" width="30.4" height="30.4" fill="#f8f9fb" rx="5.5" stroke="#8f9398" stroke-width="2.8" />
<circle cx="1434.6" cy="673.4000000000001" r="2.6" fill="#31363d"/>
<circle cx="1434.6" cy="683.6" r="2.6" fill="#31363d"/>
<circle cx="1434.6" cy="693.6" r="2.6" fill="#31363d"/>
<clipPath id="cb2"><rect x="2756" y="700.9000000000001" width="300" height="17.6" rx="8.8"/></clipPath>
<g clip-path="url(#cb2)">
<rect x="2756" y="700.9000000000001" width="232" height="17.6" fill="#d0d3d8" />
<rect x="2756" y="700.9000000000001" width="142" height="17.6" fill="#6ca6e2" />
<rect x="2898" y="700.9000000000001" width="4.6" height="17.6" fill="#ffffff" />
</g>
<rect x="687" y="857.2" width="2301" height="2" fill="#e6e8eb" />
<rect x="738.0" y="784.6" width="30.4" height="30.4" fill="#f8f9fb" rx="5.5" stroke="#8f9398" stroke-width="2.8" />
<circle cx="1434.6" cy="789.5000000000001" r="2.6" fill="#31363d"/>
<circle cx="1434.6" cy="799.7" r="2.6" fill="#31363d"/>
<circle cx="1434.6" cy="809.7" r="2.6" fill="#31363d"/>
<clipPath id="cb3"><rect x="2756" y="817.0000000000001" width="300" height="17.6" rx="8.8"/></clipPath>
<g clip-path="url(#cb3)">
<rect x="2756" y="817.0000000000001" width="232" height="17.6" fill="#d0d3d8" />
<rect x="2756" y="817.0000000000001" width="34" height="17.6" fill="#6ca6e2" />
<rect x="2790" y="817.0000000000001" width="4.6" height="17.6" fill="#ffffff" />
</g>
<rect x="687" y="973.0" width="2301" height="2" fill="#e6e8eb" />
<rect x="738.0" y="900.4" width="30.4" height="30.4" fill="#f8f9fb" rx="5.5" stroke="#8f9398" stroke-width="2.8" />
<circle cx="1434.6" cy="905.3000000000001" r="2.6" fill="#31363d"/>
<circle cx="1434.6" cy="915.5" r="2.6" fill="#31363d"/>
<circle cx="1434.6" cy="925.5" r="2.6" fill="#31363d"/>
<clipPath id="cb4"><rect x="2756" y="932.8000000000001" width="300" height="17.6" rx="8.8"/></clipPath>
<g clip-path="url(#cb4)">
<rect x="2756" y="932.8000000000001" width="232" height="17.6" fill="#d0d3d8" />
<rect x="2756" y="932.8000000000001" width="34" height="17.6" fill="#6ca6e2" />
<rect x="2790" y="932.8000000000001" width="4.6" height="17.6" fill="#ffffff" />
</g>
<rect x="687" y="1090.0" width="2301" height="2" fill="#e6e8eb" />
<rect x="738.0" y="1017.4" width="30.4" height="30.4" fill="#f8f9fb" rx="5.5" stroke="#8f9398" stroke-width="2.8" />
<circle cx="1434.6" cy="1022.3000000000001" r="2.6" fill="#31363d"/>
<circle cx="1434.6" cy="1032.5" r="2.6" fill="#31363d"/>
<circle cx="1434.6" cy="1042.5" r="2.6" fill="#31363d"/>
<clipPath id="cb5"><rect x="2756" y="1049.8" width="300" height="17.6" rx="8.8"/></clipPath>
<g clip-path="url(#cb5)">
<rect x="2756" y="1049.8" width="232" height="17.6" fill="#d0d3d8" />
<rect x="2756" y="1049.8" width="16" height="17.6" fill="#6ca6e2" />
<rect x="2772" y="1049.8" width="4.6" height="17.6" fill="#ffffff" />
</g></svg>
<div style="position:absolute;left:0;top:0;width:2990px;height:1674px;will-change:transform">
<div class="t" style="left:261.17px;top:31.32px;font-size:35.5px;font-weight:400;color:#0b5cb5;transform:scaleX(1.0206);">Resource Browser</div>
<div class="t" style="left:591.89px;top:31.62px;font-size:35.5px;font-weight:700;color:#0b1016;transform:scaleX(0.9964);">default_cluster</div>
<div class="t" style="left:1648.09px;top:33.20px;font-size:28px;font-weight:700;color:#0b5cb5;transform:scaleX(0.9277);">Compare &amp; Sync</div>
<div class="t" style="left:1969.18px;top:33.20px;font-size:28px;font-weight:700;color:#ffffff;transform:scaleX(0.9413);">Create Resource</div>
<div class="t" style="left:2240.00px;top:33.70px;font-size:28px;font-weight:700;color:#0b5cb5;transform:scaleX(0.9488);">Try Enterprise</div>
<div class="t" style="left:2700.20px;top:33.38px;font-size:30.5px;font-weight:700;color:#101418;transform:scaleX(0.9448);">Help</div>
<div class="t" style="left:41.25px;top:24.10px;font-size:30px;font-weight:700;color:#ffffff;transform:scaleX(0.7509);-webkit-text-stroke:0.6px #fff;">ST</div>
<div class="t" style="left:2865.05px;top:32.00px;font-size:30px;font-weight:700;color:#ffffff;transform:scaleX(0.9600);">A</div>
<div class="t" style="left:240.16px;top:126.35px;font-size:29px;font-weight:700;color:#0b1016;transform:scaleX(0.9285);">Overview</div>
<div class="t" style="left:467.29px;top:126.35px;font-size:29px;font-weight:700;color:#0b1016;transform:scaleX(0.9433);">Node</div>
<div class="t" style="left:2894.67px;top:128.07px;font-size:26.5px;font-weight:400;color:#333b45;transform:scaleX(0.9979);">3s ago</div>
<div class="t" style="left:231.58px;top:237.00px;font-size:28px;font-weight:400;color:#6b7079;transform:scaleX(0.9696);">Jump to Kind</div>
<div class="t" style="left:169.79px;top:342.53px;font-size:29.5px;font-weight:700;color:#0a62bd;transform:scaleX(0.9803);">Nodes</div>
<div class="t" style="left:168.75px;top:411.93px;font-size:29.5px;font-weight:400;color:#0b1016;transform:scaleX(0.9775);">Events</div>
<div class="t" style="left:168.91px;top:481.33px;font-size:29.5px;font-weight:400;color:#0b1016;transform:scaleX(0.9957);">Namespaces</div>
<div class="t" style="left:223.40px;top:550.73px;font-size:29.5px;font-weight:700;color:#0b1016;transform:scaleX(0.9747);">Workloads</div>
<div class="t" style="left:222.52px;top:620.12px;font-size:29.5px;font-weight:700;color:#0b1016;transform:scaleX(0.9534);">Config &amp; Storage</div>
<div class="t" style="left:221.51px;top:689.52px;font-size:29.5px;font-weight:700;color:#0b1016;transform:scaleX(1.0236);">Networking</div>
<div class="t" style="left:221.79px;top:758.92px;font-size:29.5px;font-weight:700;color:#0b1016;transform:scaleX(0.8755);">RBAC</div>
<div class="t" style="left:222.94px;top:828.33px;font-size:29.5px;font-weight:700;color:#0b1016;transform:scaleX(0.9949);">Administration</div>
<div class="t" style="left:222.51px;top:897.73px;font-size:29.5px;font-weight:700;color:#0b1016;transform:scaleX(0.9681);">Other Resources</div>
<div class="t" style="left:222.52px;top:967.12px;font-size:29.5px;font-weight:700;color:#0b1016;transform:scaleX(0.9554);">Custom Resource</div>
<div class="t" style="left:611.32px;top:234.10px;font-size:28px;font-weight:400;color:#2d3238;transform:scaleX(1.0167);">k</div>
<div class="t" style="left:798.09px;top:236.30px;font-size:30px;font-weight:400;color:#6b7079;transform:scaleX(0.9722);">Search Nodes</div>
<div class="t" style="left:2381.90px;top:236.78px;font-size:28.5px;font-weight:700;color:#0b1016;transform:scaleX(0.9527);">Filter</div>
<div class="t" style="left:2476.29px;top:237.90px;font-size:27.3px;font-weight:400;color:#2d3238;transform:scaleX(0.8498);">F</div>
<div class="t" style="left:2636.56px;top:236.35px;font-size:29px;font-weight:400;color:#6b7079;transform:scaleX(1.0594);">Column</div>
<div class="t" style="left:809.35px;top:338.32px;font-size:27.5px;font-weight:700;color:#333a42;transform:scaleX(0.9615);">NAME</div>
<div class="t" style="left:1505.21px;top:338.32px;font-size:27.5px;font-weight:700;color:#333a42;transform:scaleX(0.9039);">STATUS</div>
<div class="t" style="left:1979.94px;top:338.32px;font-size:27.5px;font-weight:700;color:#333a42;transform:scaleX(0.8517);">ROLES</div>
<div class="t" style="left:2455.53px;top:338.32px;font-size:27.5px;font-weight:700;color:#333a42;transform:scaleX(0.8541);">ERRORS</div>
<div class="t" style="left:2754.94px;top:338.32px;font-size:27.5px;font-weight:700;color:#333a42;transform:scaleX(0.8807);">CPU USAGE</div>
<div class="t" style="left:808.68px;top:436.00px;font-size:30px;font-weight:400;color:#0b5fb8;transform:scaleX(0.9823);">gke-staging-cluster-ci-nodes-76693c35-lxcw</div>
<div class="t" style="left:1505.31px;top:435.70px;font-size:30px;font-weight:400;color:#23a06a;transform:scaleX(0.9351);">Ready</div>
<div class="t" style="left:1979.65px;top:436.00px;font-size:30px;font-weight:400;color:#0b1016;transform:scaleX(1.0385);">none</div>
<div class="t" style="left:2754.86px;top:422.00px;font-size:30px;font-weight:400;color:#0b1016;">57m</div>
<div class="t" style="left:808.66px;top:552.20px;font-size:30px;font-weight:400;color:#0b5fb8;">gke-staging-cluster-stagind-default-p-1d63</div>
<div class="t" style="left:1371.11px;top:552.20px;font-size:30px;font-weight:400;color:#1b1f24;">...</div>
<div class="t" style="left:1505.31px;top:551.90px;font-size:30px;font-weight:400;color:#23a06a;transform:scaleX(0.9351);">Ready</div>
<div class="t" style="left:1979.65px;top:552.20px;font-size:30px;font-weight:400;color:#0b1016;transform:scaleX(1.0385);">none</div>
<div class="t" style="left:2753.93px;top:538.20px;font-size:30px;font-weight:400;color:#0b1016;">1.07</div>
<div class="t" style="left:808.66px;top:669.50px;font-size:30px;font-weight:400;color:#0b5fb8;">gke-staging-cluster-stagind-default-p-1d63</div>
<div class="t" style="left:1371.11px;top:669.50px;font-size:30px;font-weight:400;color:#1b1f24;">...</div>
<div class="t" style="left:1505.31px;top:669.20px;font-size:30px;font-weight:400;color:#23a06a;transform:scaleX(0.9351);">Ready</div>
<div class="t" style="left:1979.65px;top:669.50px;font-size:30px;font-weight:400;color:#0b1016;transform:scaleX(1.0385);">none</div>
<div class="t" style="left:2754.39px;top:655.50px;font-size:30px;font-weight:400;color:#0b1016;">2.68</div>
<div class="t" style="left:808.66px;top:785.60px;font-size:30px;font-weight:400;color:#0b5fb8;">gke-staging-cluster-stagind-default-p-1d63</div>
<div class="t" style="left:1371.11px;top:785.60px;font-size:30px;font-weight:400;color:#1b1f24;">...</div>
<div class="t" style="left:1505.31px;top:785.30px;font-size:30px;font-weight:400;color:#23a06a;transform:scaleX(0.9351);">Ready</div>
<div class="t" style="left:1979.65px;top:785.60px;font-size:30px;font-weight:400;color:#0b1016;transform:scaleX(1.0385);">none</div>
<div class="t" style="left:2754.39px;top:771.60px;font-size:30px;font-weight:400;color:#0b1016;">645m</div>
<div class="t" style="left:808.66px;top:901.40px;font-size:30px;font-weight:400;color:#0b5fb8;">gke-staging-cluster-stagind-default-p-1d63</div>
<div class="t" style="left:1371.11px;top:901.40px;font-size:30px;font-weight:400;color:#1b1f24;">...</div>
<div class="t" style="left:1505.31px;top:901.10px;font-size:30px;font-weight:400;color:#23a06a;transform:scaleX(0.9351);">Ready</div>
<div class="t" style="left:1979.65px;top:901.40px;font-size:30px;font-weight:400;color:#0b1016;transform:scaleX(1.0385);">none</div>
<div class="t" style="left:2754.39px;top:887.40px;font-size:30px;font-weight:400;color:#0b1016;">640m</div>
<div class="t" style="left:808.66px;top:1018.40px;font-size:30px;font-weight:400;color:#0b5fb8;">gke-staging-cluster-stagind-default-p-1d63</div>
<div class="t" style="left:1371.11px;top:1018.40px;font-size:30px;font-weight:400;color:#1b1f24;">...</div>
<div class="t" style="left:1505.31px;top:1018.10px;font-size:30px;font-weight:400;color:#23a06a;transform:scaleX(0.9351);">Ready</div>
<div class="t" style="left:1979.65px;top:1018.40px;font-size:30px;font-weight:400;color:#0b1016;transform:scaleX(1.0385);">none</div>
<div class="t" style="left:2754.86px;top:1004.40px;font-size:30px;font-weight:400;color:#0b1016;">328m</div>
</div>
</body></html>
